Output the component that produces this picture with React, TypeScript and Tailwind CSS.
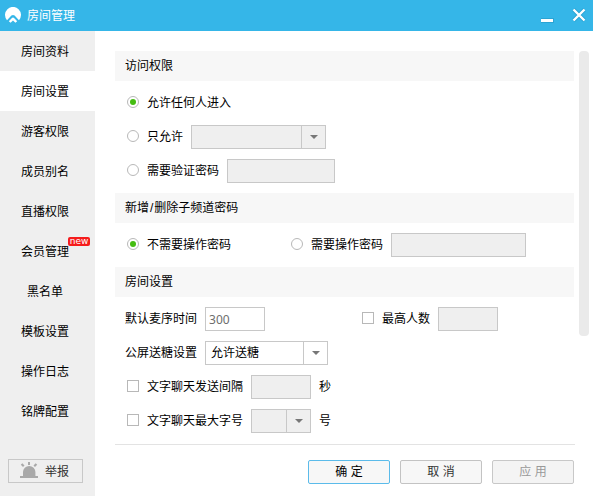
import type { ReactNode } from "react"

const menu = [
  { label: "房间资料" },
  { label: "房间设置", active: true },
  { label: "游客权限" },
  { label: "成员别名" },
  { label: "直播权限" },
  { label: "会员管理", isNew: true },
  { label: "黑名单" },
  { label: "模板设置" },
  { label: "操作日志" },
  { label: "铭牌配置" },
]

const TitleBar = () => (
  <header className="flex h-[31px] items-center bg-[#35b6e8] text-white">
    <svg className="ml-[5px] shrink-0" width="16" height="17" viewBox="0 0 16 17">
      <path fill="#fff" d="M2 13.2A8 8 0 1 1 14 13.2L9.6 8.6Q8 7.2 6.4 8.6Z" />
      <path fill="#fff" d="M3.8 14.2L6.7 11.2Q8 10 9.3 11.2L12.2 14.2L10.4 15.8L8 13.4L5.6 15.8Z" />
    </svg>
    <span className="ml-1.5">房间管理</span>
    <svg className="ml-auto" width="52" height="31" viewBox="0 0 52 31">
      <rect x="-1" y="18" width="14" height="5" fill="#2ba3d3" />
      <rect x="0" y="19" width="12" height="3" fill="#fff" />
      <path d="M32.5 9.5L43.5 20.5M43.5 9.5L32.5 20.5" stroke="#2ba3d3" strokeWidth="4" />
      <path d="M32.5 9.5L43.5 20.5M43.5 9.5L32.5 20.5" stroke="#fff" strokeWidth="2.4" />
    </svg>
  </header>
)

const Sidebar = () => (
  <aside className="flex w-[95px] flex-col bg-[#efefef]">
    <ul>
      {menu.map((item) => (
        <li
          key={item.label}
          className={`flex h-10 items-center justify-center pt-0.5 pr-[5px] ${item.active ? "bg-white" : ""}`}
        >
          <span className="relative">
            {item.label}
            {item.isNew && (
              <span className="absolute -top-[7px] left-[47px] flex h-[9px] w-[22px] items-center justify-center rounded-[2px] bg-[#f51c1c] pb-px font-['DejaVu_Sans',sans-serif] text-[9px] leading-none text-white">
                new
              </span>
            )}
          </span>
        </li>
      ))}
    </ul>
    <button className="mt-auto mb-[13px] ml-2 flex h-6 w-[75px] items-center border border-[#c8c8c8] pl-[11px] text-[#333]">
      <svg width="18" height="18" viewBox="0 0 18 18" fill="#a9a9a9">
        <path d="M3 14V10a6.2 6 0 0 1 12.4 0v4H18v2H0v-2z" />
        <path d="M8 0h2v3H8zM2.3 1.3l2.2 2.2-1.5 1.5L.8 2.8zM15.7 1.3l-2.2 2.2 1.5 1.5 2.2-2.2z" />
      </svg>
      <span className="mt-0.5 ml-[7px]">举报</span>
    </button>
  </aside>
)

const Section = ({ title, children }: { title: ReactNode; children: ReactNode }) => (
  <section>
    <h2 className="h-[30px] bg-[#f7f7f7] pl-2.5 leading-[31px]">{title}</h2>
    <div className="flex flex-col gap-2.5 py-2.5 pl-2.5">{children}</div>
  </section>
)

const Row = ({ children }: { children: ReactNode }) => (
  <div className="flex h-6 items-center">{children}</div>
)

const Radio = ({ label, checked }: { label: string; checked?: boolean }) => (
  <label className="ml-0.5 flex items-center">
    <span className="mr-2 mb-0.5 flex size-3 items-center justify-center rounded-full border border-[#b8b8b8] bg-white">
      {checked && <span className="size-1.5 rounded-full bg-[#45bd12]" />}
    </span>
    {label}
  </label>
)

const Checkbox = ({ label }: { label: string }) => (
  <label className="ml-0.5 flex items-center">
    <span className="mr-2 mb-0.5 size-3 border border-[#b8b8b8] bg-white" />
    {label}
  </label>
)

const Field = ({ className, children }: { className: string; children?: ReactNode }) => (
  <div className={`ml-2 flex h-6 items-center border border-[#c8c8c8] ${className}`}>{children}</div>
)

const Select = ({ className, value }: { className: string; value?: string }) => (
  <Field className={className}>
    <span className="flex-1 pl-[5px]">{value}</span>
    <span className="flex h-full w-6 items-center justify-center border-l border-[#c8c8c8]">
      <svg width="8" height="4" viewBox="0 0 8 4">
        <path d="M0 0h8L4 4z" fill="#777" />
      </svg>
    </span>
  </Field>
)

const App = () => {
  return (
    <div className="flex h-[496px] w-[593px] flex-col overflow-hidden bg-white font-['Liberation_Sans','Noto_Sans_CJK_SC',sans-serif] text-xs leading-4 text-black">
      <TitleBar />
      <div className="flex flex-1">
        <Sidebar />
        <main className="flex flex-1 flex-col pl-5">
          <div className="flex pt-5">
            <div className="w-[459px]">
              <Section title="访问权限">
                <Row>
                  <Radio label="允许任何人进入" checked />
                </Row>
                <Row>
                  <Radio label="只允许" />
                  <Select className="w-[135px] bg-[#efefef]" />
                </Row>
                <Row>
                  <Radio label="需要验证密码" />
                  <Field className="w-[108px] bg-[#efefef]" />
                </Row>
              </Section>
              <Section
                title={
                  <>
                    新增<span className="mx-px">/</span>删除子频道密码
                  </>
                }
              >
                <Row>
                  <div className="w-[164px]">
                    <Radio label="不需要操作密码" checked />
                  </div>
                  <Radio label="需要操作密码" />
                  <Field className="w-[135px] bg-[#efefef]" />
                </Row>
              </Section>
              <Section title="房间设置">
                <Row>
                  默认麦序时间
                  <Field className="mr-[95px] w-[60px] pt-0.5 pl-[3px] font-['Noto_Sans',sans-serif] text-[#6d6d6d]">
                    300
                  </Field>
                  <Checkbox label="最高人数" />
                  <Field className="w-[60px] bg-[#efefef]" />
                </Row>
                <Row>
                  公屏送糖设置
                  <Select className="w-[123px]" value="允许送糖" />
                </Row>
                <Row>
                  <Checkbox label="文字聊天发送间隔" />
                  <Field className="w-[60px] bg-[#efefef]" />
                  <span className="ml-2">秒</span>
                </Row>
                <Row>
                  <Checkbox label="文字聊天最大字号" />
                  <Select className="w-[60px] bg-[#efefef]" />
                  <span className="ml-2">号</span>
                </Row>
              </Section>
            </div>
            <div className="ml-[5px] h-[285px] w-2.5 rounded-[4px] bg-[#eaeaea]" />
          </div>
          <footer className="mt-px flex w-[460px] gap-2.5 border-t border-[#e3e3e3] pt-[15px] pl-[193px]">
            <button className="h-6 w-[82px] rounded-[2px] border border-[#5bbbea] bg-[#f7f7f7]">确 定</button>
            <button className="h-6 w-[82px] rounded-[2px] border border-[#c3c3c3] bg-[#f7f7f7] text-[#333]">
              取 消
            </button>
            <button className="h-6 w-[82px] rounded-[2px] border border-[#c8c8c8] bg-[#f4f4f4] text-[#999]">
              应 用
            </button>
          </footer>
        </main>
      </div>
    </div>
  )
}

export default App
